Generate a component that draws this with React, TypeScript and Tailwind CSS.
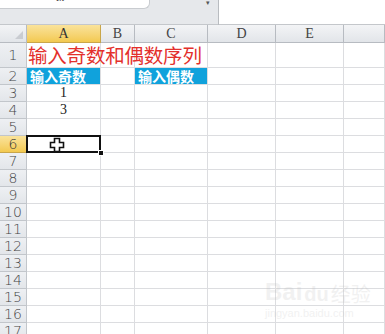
import React from "react";

const cols = ["A", "B", "C", "D", "E", ""];
const rowHeights: Record<number, string> = { 1: "h-[25px]" };

function Plus() {
  return (
    <svg width="16" height="16" viewBox="0 0 16 16" className="absolute left-[22px] top-[1px]">
      <path
        d="M5.5 1.5h5v4h4v5h-4v4h-5v-4h-4v-5h4z"
        fill="#ffffff"
        stroke="#111"
        strokeWidth="1.6"
        strokeLinejoin="miter"
      />
    </svg>
  );
}

export default function App() {
  const rows = Array.from({ length: 17 }, (_, i) => i + 1);
  return (
    <div className="w-[385px] h-[334px] overflow-hidden bg-white relative" style={{ fontFamily: '"Liberation Serif", serif' }}>
      {/* top strip */}
      <div className="flex h-[25px]">
        <div className="w-[219px] flex flex-col bg-[#e6e8eb] border-r border-[#b9bcc0]">
          <div className="flex h-[9px]">
            <div className="w-[150px] bg-white rounded-br-[6px] border-b border-r border-[#c9ccd0] relative overflow-hidden">
              <span className="absolute left-[56px] top-[-7px] text-[10px] leading-[10px] text-[#333]">fx</span>
            </div>
            <div className="flex-1 flex justify-end pr-[8px]">
              <span className="text-[7px] leading-[7px] text-[#555]">▾</span>
            </div>
          </div>
          <div className="flex-1 border-b border-[#c4c7cb]" />
        </div>
        <div className="flex-1 bg-white border-b border-[#c4c7cb]" />
      </div>
      {/* sheet */}
      <div className="grid grid-cols-[27px_74px_34px_73px_68px_68px_41px]">
        {/* header row */}
        <div className="h-[18px] bg-gradient-to-b from-[#f3f4f6] to-[#e2e5e9] border-r border-b border-[#b7bbc1] relative">
          <div className="absolute right-[3px] bottom-[3px] w-0 h-0 border-l-[8px] border-l-transparent border-b-[8px] border-b-[#c9ccd1]" />
        </div>
        {cols.map((c, i) => (
          <div
            key={i}
            className={
              "h-[18px] flex items-center justify-center text-[14px] border-r border-b " +
              (i === 0
                ? "bg-gradient-to-b from-[#fae39a] to-[#f3c94f] border-[#c9a64a] text-[#333]"
                : "bg-gradient-to-b from-[#f3f4f6] to-[#e2e5e9] border-[#b7bbc1] text-[#444]")
            }
          >
            {c}
          </div>
        ))}
        {rows.map((r) => {
          const h = rowHeights[r] ?? "h-[17px]";
          const sel = r === 6;
          return (
            <React.Fragment key={r}>
              <div
                className={
                  h +
                  " flex items-center justify-center border-r border-b " +
                  (sel
                    ? "bg-gradient-to-b from-[#fae39a] to-[#f3c94f] border-[#c9a64a] text-[#333]"
                    : "bg-gradient-to-b from-[#eef0f3] to-[#e3e6ea] border-[#c2c6cb] text-[#444]")
                }
                style={{ fontFamily: '"DejaVu Sans", sans-serif', fontWeight: 300 }}
              >
                <span className="text-[14px] leading-none">{r}</span>
              </div>
              {cols.map((_, ci) => {
                let content: React.ReactNode = null;
                let extra = "";
                if (r === 1 && ci === 0) {
                  content = (
                    <span
                      className="absolute left-[1px] top-[1px] whitespace-nowrap text-[19.5px] leading-[22px] text-[#e3302c] z-10"
                      style={{ fontFamily: '"Noto Sans CJK SC", sans-serif', letterSpacing: "-0.2px" }}
                    >
                      输入奇数和偶数序列
                    </span>
                  );
                }
                if (r === 2 && (ci === 0 || ci === 2)) {
                  extra = " bg-[#10a2dc]";
                  content = (
                    <span
                      className="pl-[3px] text-[14px] font-bold text-white leading-[16px]"
                      style={{ fontFamily: '"Noto Sans CJK SC", sans-serif' }}
                    >
                      {ci === 0 ? "输入奇数" : "输入偶数"}
                    </span>
                  );
                }
                if ((r === 3 || r === 4) && ci === 0) {
                  content = (
                    <span className="w-full text-center text-[14px] text-[#222] leading-[16px]">
                      {r === 3 ? "1" : "3"}
                    </span>
                  );
                }
                return (
                  <div
                    key={ci}
                    className={h + " relative flex items-center border-r border-b border-[#dcdde0]" + extra}
                  >
                    {content}
                    {sel && ci === 0 && (
                      <>
                        <div className="absolute left-[-1px] top-[-1px] right-[-1px] bottom-[-1px] border-2 border-[#111] z-10" />
                        <div className="absolute right-[-4px] bottom-[-4px] w-[6px] h-[6px] bg-[#111] border border-white z-20" />
                        <Plus />
                      </>
                    )}
                  </div>
                );
              })}
            </React.Fragment>
          );
        })}
      </div>
      {/* watermark */}
      <div className="absolute left-[265px] top-[280px] pointer-events-none opacity-20 text-[#bbb]" style={{ fontFamily: '"Liberation Sans", sans-serif' }}>
        <div className="flex items-end gap-[2px]">
          <span className="text-[24px] font-bold leading-none">Bai</span>
          <span className="text-[20px] font-bold leading-none">du</span>
          <span className="text-[20px] leading-none" style={{ fontFamily: '"Noto Sans CJK SC", sans-serif' }}>经验</span>
        </div>
        <div className="text-[11px] leading-none mt-[4px]">jingyan.baidu.com</div>
      </div>
    </div>
  );
}
